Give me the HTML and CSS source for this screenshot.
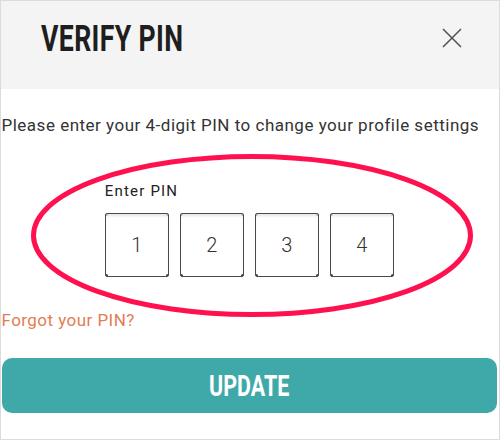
FILE: index.html
```html
<!DOCTYPE html>
<html>
<head>
<meta charset="utf-8">
<link rel="stylesheet" href="styles.css">
</head>
<body>
<div class="frame">
  <header class="head">
    <h1 class="title"><span class="title-text">VERIFY PIN</span></h1>
    <button class="close" aria-label="Close">
      <svg width="22" height="22" viewBox="0 0 22 22"><path d="M2 2L20 20M20 2L2 20" stroke="#555" stroke-width="1.6" fill="none"/></svg>
    </button>
  </header>
  <main class="body">
    <p class="desc">Please enter your 4-digit PIN to change your profile settings</p>
    <section class="pin">
      <div class="pin-inner">
        <div class="pin-label">Enter PIN</div>
        <div class="boxes">
          <div class="box">1</div>
          <div class="box">2</div>
          <div class="box">3</div>
          <div class="box">4</div>
        </div>
      </div>
      <svg class="ring" width="450" height="169" viewBox="0 0 450 169"><ellipse cx="225" cy="84.5" rx="218.5" ry="79" fill="none" stroke="#ff1150" stroke-width="5"/></svg>
    </section>
    <a class="forgot" href="#">Forgot your PIN?</a>
    <button class="update"><span class="update-text">UPDATE</span></button>
  </main>
</div>
</body>
</html>
```
FILE: styles.css
```css
* { box-sizing: border-box; }
html, body { margin: 0; padding: 0; background: #fff; }
.frame {
  width: 500px;
  height: 440px;
  border: 1.5px solid #dcdcdc;
  font-family: Roboto, "Liberation Sans", sans-serif;
  display: flex;
  flex-direction: column;
  overflow: hidden;
}
.head {
  height: 88px;
  background: #f4f4f4;
  display: flex;
  align-items: flex-start;
  justify-content: space-between;
  padding: 0 36px 0 40px;
}
.title {
  margin: 0;
  padding-top: 17px;
  font-size: 36px;
  font-weight: 700;
  line-height: 42px;
  color: #1e1e1e;
}
.title-text {
  display: inline-block;
  transform: scaleX(0.74);
  transform-origin: left center;
  letter-spacing: 0.5px;
}
.close {
  margin-top: 26px;
  border: 0;
  background: none;
  padding: 0;
  width: 22px;
  height: 22px;
}
.body {
  flex: 1;
  display: flex;
  flex-direction: column;
  padding: 0 2px 0 0.5px;
}
.desc {
  margin: 26px 0 0;
  font-size: 17px;
  letter-spacing: 0.5px;
  line-height: 20px;
  color: #333;
}
.pin {
  position: relative;
  display: flex;
  justify-content: center;
  margin-top: 48px;
}
.pin-inner {
  display: flex;
  flex-direction: column;
}
.pin-label {
  font-size: 15px;
  letter-spacing: 1.2px;
  color: #222;
  line-height: 16px;
}
.boxes {
  display: flex;
  gap: 11px;
  margin-top: 14px;
}
.box {
  width: 64px;
  height: 64px;
  border: 1.5px solid #4a4a4a;
  border-radius: 2px;
  display: flex;
  align-items: center;
  justify-content: center;
  font-size: 20px;
  font-weight: 300;
  color: #333;
  box-shadow: inset 0 3px 3px -1px #e6e6e6;
  background:
    radial-gradient(circle at 0 0, #333 1.5px, transparent 2.5px),
    radial-gradient(circle at 100% 0, #333 1.5px, transparent 2.5px),
    radial-gradient(circle at 0 100%, #333 1.5px, transparent 2.5px),
    radial-gradient(circle at 100% 100%, #333 1.5px, transparent 2.5px),
    #fff;
}
.ring {
  position: absolute;
  left: 25px;
  top: -32.5px;
  pointer-events: none;
}
.forgot {
  margin-top: 33px;
  font-size: 17px;
  letter-spacing: 0.45px;
  line-height: 20px;
  color: #e27d52;
  text-decoration: none;
  align-self: flex-start;
}
.update {
  margin-top: 28px;
  height: 55px;
  border: 0;
  border-radius: 10px;
  background: #3fa9aa;
  color: #fff;
  font-family: Roboto, "Liberation Sans", sans-serif;
  font-size: 29px;
  font-weight: 700;
  padding: 0;
}
.update-text {
  display: inline-block;
  transform: scaleX(0.74);
}
```
